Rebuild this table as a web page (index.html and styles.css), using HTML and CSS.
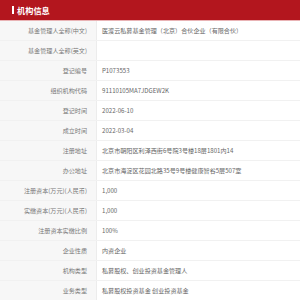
FILE: index.html
```html
<!DOCTYPE html>
<html lang="zh">
<head>
<meta charset="utf-8">
<title>机构信息</title>
<link rel="stylesheet" href="styles.css">
</head>
<body>
<div class="panel">
  <div class="head"><span class="bar"></span><span class="title">机构信息</span></div>
  <div class="table">
    <div class="row"><div class="label">基金管理人全称(中文)</div><div class="value">医渡云私募基金管理（北京）合伙企业（有限合伙）</div></div>
    <div class="row"><div class="label">基金管理人全称(英文)</div><div class="value"></div></div>
    <div class="row"><div class="label">登记编号</div><div class="value">P1073553</div></div>
    <div class="row"><div class="label">组织机构代码</div><div class="value">91110105MA7JDGEW2K</div></div>
    <div class="row"><div class="label">登记时间</div><div class="value">2022-06-10</div></div>
    <div class="row"><div class="label">成立时间</div><div class="value">2022-03-04</div></div>
    <div class="row"><div class="label">注册地址</div><div class="value">北京市朝阳区利泽西街6号院3号楼18层1801内14</div></div>
    <div class="row"><div class="label">办公地址</div><div class="value">北京市海淀区花园北路35号9号楼健康智谷5层507室</div></div>
    <div class="row"><div class="label">注册资本(万元)(人民币)</div><div class="value">1,000</div></div>
    <div class="row"><div class="label">实缴资本(万元)(人民币)</div><div class="value">1,000</div></div>
    <div class="row"><div class="label">注册资本实缴比例</div><div class="value">100%</div></div>
    <div class="row"><div class="label">企业性质</div><div class="value">内资企业</div></div>
    <div class="row"><div class="label">机构类型</div><div class="value">私募股权、创业投资基金管理人</div></div>
    <div class="row"><div class="label">业务类型</div><div class="value">私募股权投资基金 创业投资基金</div></div>
  </div>
</div>
</body>
</html>
```
FILE: styles.css
```css
html, body {
  margin: 0;
  padding: 0;
  background: #ffffff;
}
body {
  font-family: "Noto Sans CJK SC", "Noto Sans", sans-serif;
  overflow: hidden;
}
.panel {
  width: 300px;
}
.head {
  height: 20px;
  background: #b3161e;
  border-bottom: 1px solid #e9b3b5;
  display: flex;
  align-items: center;
  padding-left: 12px;
  gap: 3px;
}
.bar {
  width: 2px;
  height: 8px;
  background: #ffffff;
}
.title {
  color: #ffffff;
  font-size: 8.2px;
  font-weight: bold;
  line-height: 1;
}
.row {
  display: grid;
  grid-template-columns: 97px 1fr;
  height: 19px;
  border-bottom: 1px solid #f1f1f1;
  font-size: 6.1px;
  line-height: 19px;
}
.label {
  background: #f7f7f7;
  color: #777777;
  text-align: right;
  padding-right: 9px;
  border-right: 1px solid #ececec;
  white-space: nowrap;
}
.value {
  color: #666666;
  padding-left: 5px;
  white-space: nowrap;
}
```
